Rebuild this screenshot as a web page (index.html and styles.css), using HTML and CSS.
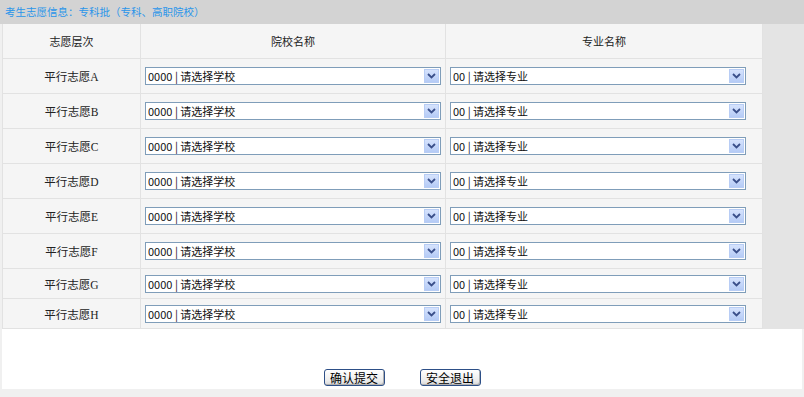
FILE: index.html
```html
<!DOCTYPE html>
<html lang="zh">
<head>
<meta charset="utf-8">
<link rel="stylesheet" href="styles.css">
</head>
<body>
<div class="title">考生志愿信息：专科批（专科、高职院校）</div>
<div class="main">
  <table class="grid">
    <colgroup><col class="c1"><col class="c2"><col class="c3"></colgroup>
    <tr class="head"><td>志愿层次</td><td>院校名称</td><td>专业名称</td></tr>
    <tr><td class="lab">平行志愿A</td><td><div class="sel"><select><option>0000 | 请选择学校</option></select><span class="arr"><svg width="9" height="6" viewBox="0 0 9 6"><path d="M1 1l3.5 3.5L8 1" fill="none" stroke="#3a4f8a" stroke-width="1.8"/></svg></span></div></td><td><div class="sel"><select><option>00 | 请选择专业</option></select><span class="arr"><svg width="9" height="6" viewBox="0 0 9 6"><path d="M1 1l3.5 3.5L8 1" fill="none" stroke="#3a4f8a" stroke-width="1.8"/></svg></span></div></td></tr>
    <tr><td class="lab">平行志愿B</td><td><div class="sel"><select><option>0000 | 请选择学校</option></select><span class="arr"><svg width="9" height="6" viewBox="0 0 9 6"><path d="M1 1l3.5 3.5L8 1" fill="none" stroke="#3a4f8a" stroke-width="1.8"/></svg></span></div></td><td><div class="sel"><select><option>00 | 请选择专业</option></select><span class="arr"><svg width="9" height="6" viewBox="0 0 9 6"><path d="M1 1l3.5 3.5L8 1" fill="none" stroke="#3a4f8a" stroke-width="1.8"/></svg></span></div></td></tr>
    <tr><td class="lab">平行志愿C</td><td><div class="sel"><select><option>0000 | 请选择学校</option></select><span class="arr"><svg width="9" height="6" viewBox="0 0 9 6"><path d="M1 1l3.5 3.5L8 1" fill="none" stroke="#3a4f8a" stroke-width="1.8"/></svg></span></div></td><td><div class="sel"><select><option>00 | 请选择专业</option></select><span class="arr"><svg width="9" height="6" viewBox="0 0 9 6"><path d="M1 1l3.5 3.5L8 1" fill="none" stroke="#3a4f8a" stroke-width="1.8"/></svg></span></div></td></tr>
    <tr><td class="lab">平行志愿D</td><td><div class="sel"><select><option>0000 | 请选择学校</option></select><span class="arr"><svg width="9" height="6" viewBox="0 0 9 6"><path d="M1 1l3.5 3.5L8 1" fill="none" stroke="#3a4f8a" stroke-width="1.8"/></svg></span></div></td><td><div class="sel"><select><option>00 | 请选择专业</option></select><span class="arr"><svg width="9" height="6" viewBox="0 0 9 6"><path d="M1 1l3.5 3.5L8 1" fill="none" stroke="#3a4f8a" stroke-width="1.8"/></svg></span></div></td></tr>
    <tr><td class="lab">平行志愿E</td><td><div class="sel"><select><option>0000 | 请选择学校</option></select><span class="arr"><svg width="9" height="6" viewBox="0 0 9 6"><path d="M1 1l3.5 3.5L8 1" fill="none" stroke="#3a4f8a" stroke-width="1.8"/></svg></span></div></td><td><div class="sel"><select><option>00 | 请选择专业</option></select><span class="arr"><svg width="9" height="6" viewBox="0 0 9 6"><path d="M1 1l3.5 3.5L8 1" fill="none" stroke="#3a4f8a" stroke-width="1.8"/></svg></span></div></td></tr>
    <tr><td class="lab">平行志愿F</td><td><div class="sel"><select><option>0000 | 请选择学校</option></select><span class="arr"><svg width="9" height="6" viewBox="0 0 9 6"><path d="M1 1l3.5 3.5L8 1" fill="none" stroke="#3a4f8a" stroke-width="1.8"/></svg></span></div></td><td><div class="sel"><select><option>00 | 请选择专业</option></select><span class="arr"><svg width="9" height="6" viewBox="0 0 9 6"><path d="M1 1l3.5 3.5L8 1" fill="none" stroke="#3a4f8a" stroke-width="1.8"/></svg></span></div></td></tr>
    <tr class="short"><td class="lab">平行志愿G</td><td><div class="sel"><select><option>0000 | 请选择学校</option></select><span class="arr"><svg width="9" height="6" viewBox="0 0 9 6"><path d="M1 1l3.5 3.5L8 1" fill="none" stroke="#3a4f8a" stroke-width="1.8"/></svg></span></div></td><td><div class="sel"><select><option>00 | 请选择专业</option></select><span class="arr"><svg width="9" height="6" viewBox="0 0 9 6"><path d="M1 1l3.5 3.5L8 1" fill="none" stroke="#3a4f8a" stroke-width="1.8"/></svg></span></div></td></tr>
    <tr class="short"><td class="lab">平行志愿H</td><td><div class="sel"><select><option>0000 | 请选择学校</option></select><span class="arr"><svg width="9" height="6" viewBox="0 0 9 6"><path d="M1 1l3.5 3.5L8 1" fill="none" stroke="#3a4f8a" stroke-width="1.8"/></svg></span></div></td><td><div class="sel"><select><option>00 | 请选择专业</option></select><span class="arr"><svg width="9" height="6" viewBox="0 0 9 6"><path d="M1 1l3.5 3.5L8 1" fill="none" stroke="#3a4f8a" stroke-width="1.8"/></svg></span></div></td></tr>
  </table>
  <div class="side"></div>
</div>
<div class="foot">
  <button class="btn">确认提交</button>
  <button class="btn">安全退出</button>
</div>
</body>
</html>
```

FILE: styles.css
```css
html, body {
  margin: 0;
  padding: 0;
  background: #f0f0f0;
}
body {
  font-family: "Noto Sans CJK SC", sans-serif;
  font-size: 11px;
  color: #222;
}
.title {
  height: 24px;
  line-height: 24px;
  background: #d3d3d3;
  color: #2a95ea;
  padding-left: 5px;
  font-size: 10.5px;
}
.main {
  display: flex;
  margin: 0 0 0 2px;
  background: #e4e4e4;
  width: 802px;
}
.grid {
  border-collapse: collapse;
  width: 760px;
  background: #f5f5f5;
  table-layout: fixed;
}
.c1 { width: 138px; }
.c2 { width: 305px; }
.c3 { width: 317px; }
.grid td {
  height: 34px;
  padding: 0;
  border-right: 1px solid #e2e2e2;
  border-bottom: 1px solid #e2e2e2;
  text-align: center;
  vertical-align: middle;
}
.grid tr.short td { height: 29px; }
.grid td:first-child { border-left: 1px solid #e2e2e2; }
.grid td.lab {
  font-family: "Liberation Serif", "Noto Sans CJK SC", serif;
  font-size: 11.5px;
}
.head td { color: #222; }
.side { flex: 1; }
.sel {
  position: relative;
  margin-left: 4px;
  width: 296px;
  height: 18px;
}
.sel select {
  appearance: none;
  -webkit-appearance: none;
  width: 100%;
  height: 18px;
  margin: 0;
  border: 1px solid #7f9db9;
  background: #fff;
  font-family: "Noto Sans CJK SC", sans-serif;
  font-size: 11px;
  color: #111;
  padding: 0 0 0 2px;
  line-height: 16px;
  border-radius: 0;
  outline: none;
}
.arr {
  position: absolute;
  right: 2px;
  top: 2px;
  width: 15px;
  height: 14px;
  background: linear-gradient(#d6e3fd, #b5cbf6);
  border: 1px solid #b8cdf5;
  box-sizing: border-box;
  display: flex;
  align-items: center;
  justify-content: center;
  pointer-events: none;
}
.foot {
  background: #fff;
  margin: 0 2px;
  height: 60px;
  display: flex;
  align-items: flex-end;
  justify-content: center;
  gap: 35px;
  padding-bottom: 3px;
  box-sizing: border-box;
}
.btn {
  width: 61px;
  height: 17px;
  padding: 0;
  font-family: "Noto Sans CJK SC", sans-serif;
  font-size: 12px;
  line-height: 15px;
  color: #000;
  background: linear-gradient(#ffffff, #ececec 70%, #d8d8d8);
  border: 1px solid #2d4f87;
  border-radius: 3px;
  box-shadow: inset -1px -1px 0 #b0b0b0;
}
```
